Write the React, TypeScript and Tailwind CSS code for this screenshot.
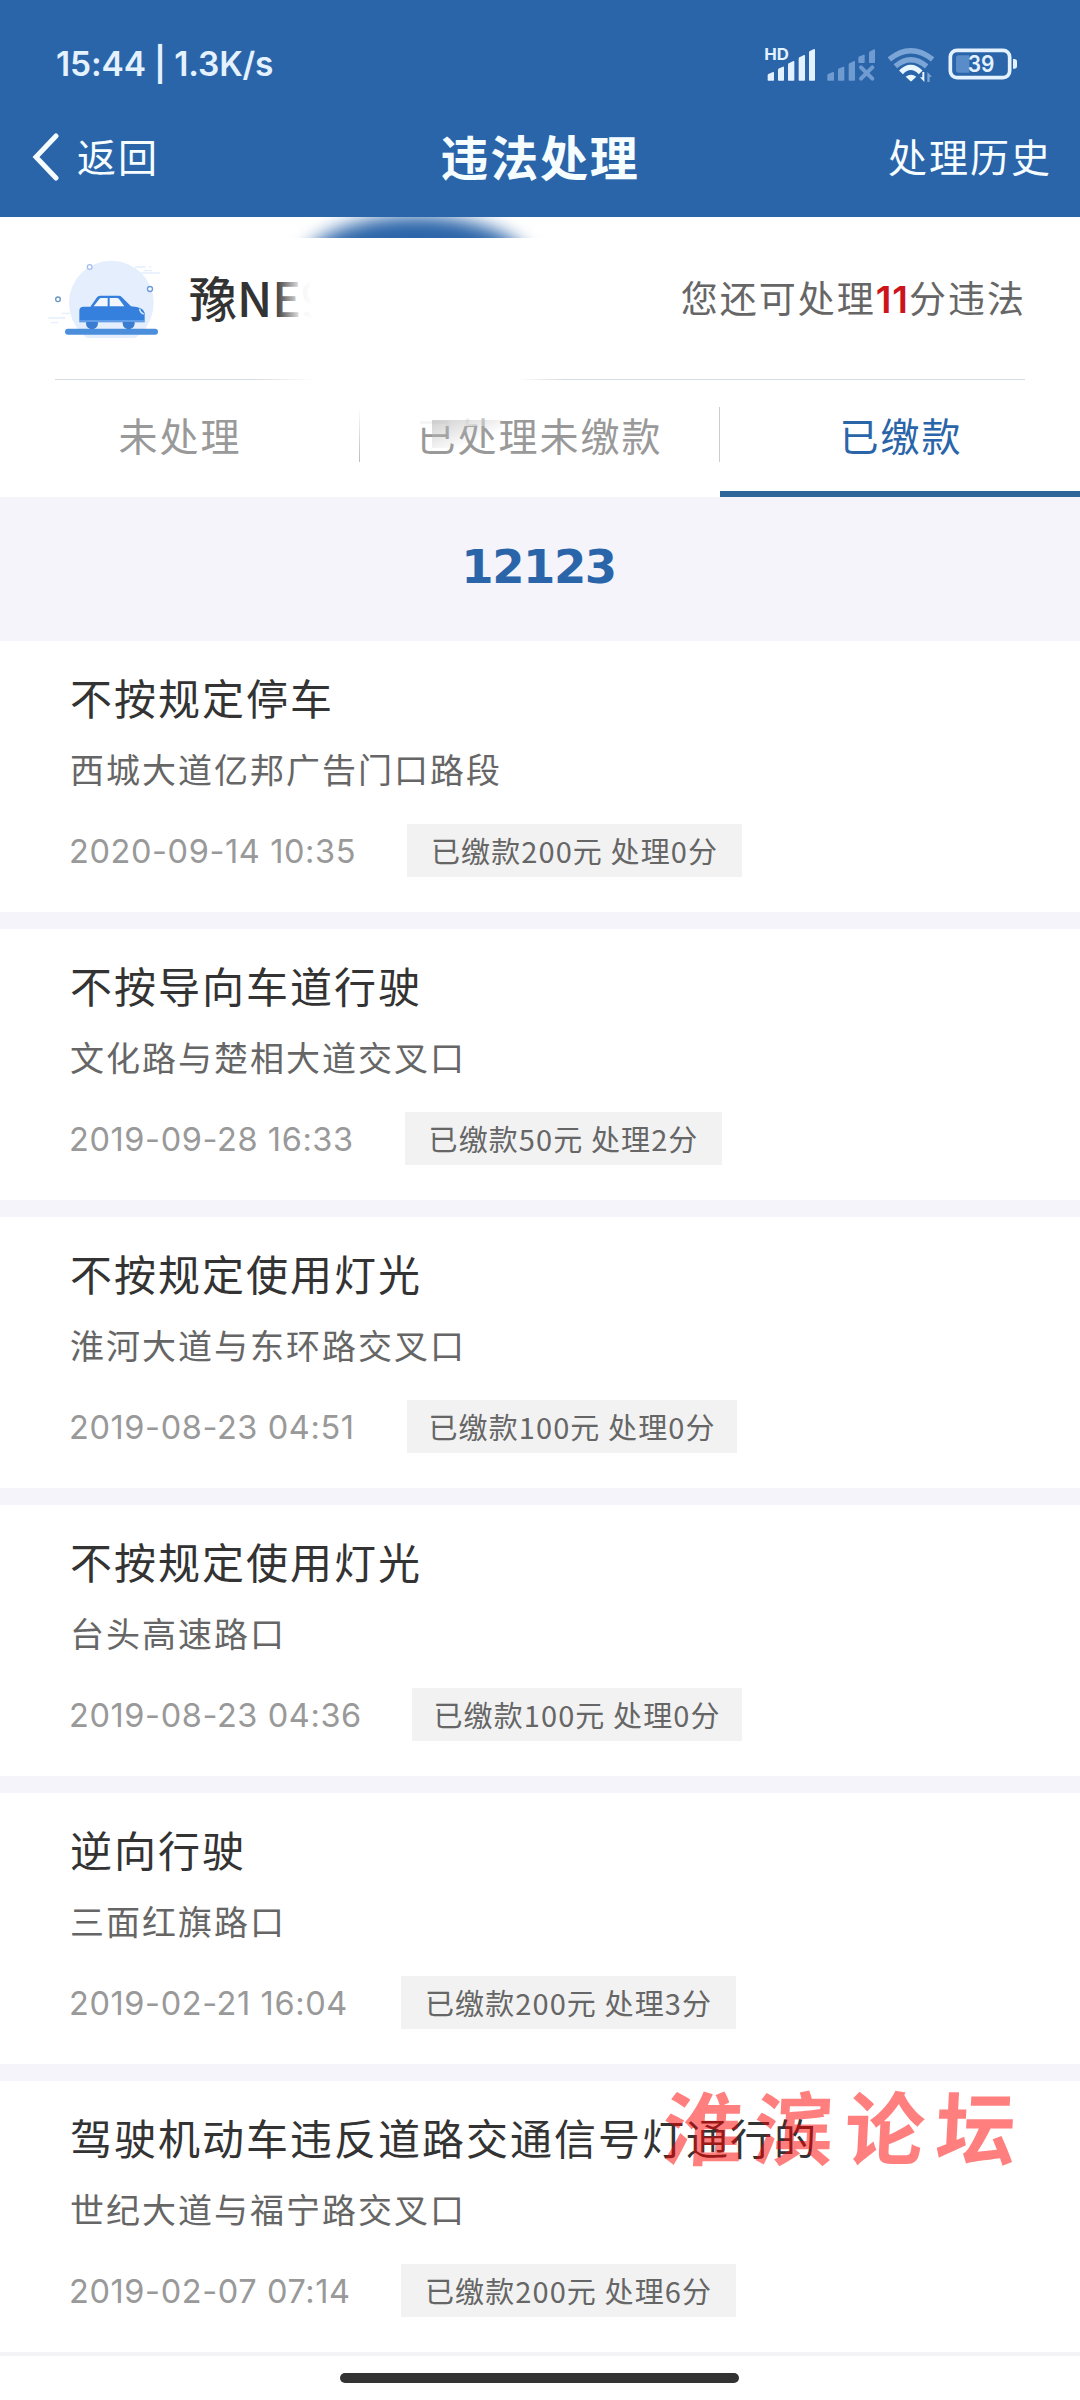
import React from 'react';

interface Violation {
  title: string;
  address: string;
  time: string;
  timeClass: string;
  tag: string;
  tagClass: string;
}

const violations: Violation[] = [
  {
    title: '不按规定停车',
    address: '西城大道亿邦广告门口路段',
    time: '2020-09-14 10:35',
    timeClass: 'w-[337px]',
    tag: '已缴款200元 处理0分',
    tagClass: 'w-[335px]',
  },
  {
    title: '不按导向车道行驶',
    address: '文化路与楚相大道交叉口',
    time: '2019-09-28 16:33',
    timeClass: 'w-[335px]',
    tag: '已缴款50元 处理2分',
    tagClass: 'w-[317px]',
  },
  {
    title: '不按规定使用灯光',
    address: '淮河大道与东环路交叉口',
    time: '2019-08-23 04:51',
    timeClass: 'w-[337px]',
    tag: '已缴款100元 处理0分',
    tagClass: 'w-[330px]',
  },
  {
    title: '不按规定使用灯光',
    address: '台头高速路口',
    time: '2019-08-23 04:36',
    timeClass: 'w-[342px]',
    tag: '已缴款100元 处理0分',
    tagClass: 'w-[330px]',
  },
  {
    title: '逆向行驶',
    address: '三面红旗路口',
    time: '2019-02-21 16:04',
    timeClass: 'w-[331px]',
    tag: '已缴款200元 处理3分',
    tagClass: 'w-[335px]',
  },
  {
    title: '驾驶机动车违反道路交通信号灯通行的',
    address: '世纪大道与福宁路交叉口',
    time: '2019-02-07 07:14',
    timeClass: 'w-[331px]',
    tag: '已缴款200元 处理6分',
    tagClass: 'w-[335px]',
  },
];

const StatusIcons: React.FC = () => (
  <svg width="270" height="60" viewBox="0 0 810 180" className="mt-[3px] shrink-0">
    <text x="28" y="72" fill="#e4f1ff" fontFamily="Inter, sans-serif" fontSize="48" fontWeight="700" textLength="74" lengthAdjust="spacingAndGlyphs">
      HD
    </text>
    {/* SIM 1 */}
    <g fill="#e4f1ff">
      <path d="M38 132v-14q0-4 4-5l12-5q3-1 3 3v21q0 2-2 2H40q-2 0-2-2z" />
      <path d="M69 132v-30q0-4 4-5l11-5q3-1 3 3v37q0 2-2 2H71q-2 0-2-2z" />
      <path d="M99 132v-46q0-4 4-5l12-6q3-1 3 3v54q0 2-2 2h-15q-2 0-2-2z" />
      <path d="M131 132v-64q0-4 4-5l12-6q3-1 3 3v72q0 2-2 2h-15q-2 0-2-2z" />
      <path d="M162 132v-83q0-4 4-5l11-5q3-1 3 3v90q0 2-2 2h-14q-2 0-2-2z" />
    </g>
    {/* SIM 2, no service */}
    <g fill="#6f9bd0">
      <path d="M217 132v-14q0-4 4-5l13-5q3-1 3 3v21q0 2-2 2h-16q-2 0-2-2z" />
      <path d="M249 132v-30q0-4 4-5l12-5q3-1 3 3v37q0 2-2 2h-15q-2 0-2-2z" />
      <path d="M281 132v-46q0-4 4-5l12-6q3-1 3 3v54q0 2-2 2h-15q-2 0-2-2z" />
      <path d="M310 79v-13q0-4 4-5l12-5q3-1 3 3v20q0 2-2 2h-15q-2 0-2-2z" />
      <path d="M342 79V51q0-4 4-5l11-6q3-1 3 3v36q0 2-2 2h-14q-2 0-2-2z" />
      <path d="M318 94l34 34M352 94l-34 34" fill="none" stroke="#6f9bd0" strokeWidth="12" strokeLinecap="round" />
    </g>
    {/* wifi */}
    <g fill="none" strokeLinecap="butt">
      <path d="M403 70Q467 18 533 70" stroke="#7ba5d6" strokeWidth="16" />
      <path d="M421 91Q467 51 515 91" stroke="#7ba5d6" strokeWidth="16" />
      <path d="M438 109Q467 79 497 109" stroke="#e9f6ff" strokeWidth="16" />
    </g>
    <path d="M452 122q16-12 32 0l-13 12q-3 3-6 0z" fill="#e9f6ff" />
    <path d="M508 108v30l-13-14h7v-16z" fill="#e9f6ff" />
    <path d="M517 138v-30l14 14h-7v16z" fill="#7ba5d6" />
    {/* battery */}
    <path d="M603 66q0-8 8-8h32v52h-32q-8 0-8-8z" fill="#5a8cc9" />
    <rect x="586" y="43" width="178" height="82" rx="20" fill="none" stroke="#e4f1ff" strokeWidth="11" />
    <path d="M774 69h4q8 0 8 8v13q0 8-8 8h-4z" fill="#e4f1ff" />
    <text x="638" y="109" fill="#e4f1ff" fontFamily="Inter, sans-serif" fontSize="67" fontWeight="600" textLength="80" lengthAdjust="spacingAndGlyphs">
      39
    </text>
  </svg>
);

const CarIllustration: React.FC = () => (
  <svg width="115" height="84" viewBox="0 0 345 252" className="mt-[-4px] shrink-0">
    <circle cx="199" cy="147" r="127" fill="#e4eefd" />
    <g stroke="#e4eefd" strokeWidth="4" fill="none">
      <path d="M270 39h32M313 39h6M296 50h26M268 57h77M278 68h20M10 192h50M50 178h24M18 206h22" />
    </g>
    <g fill="none" strokeWidth="4">
      <circle cx="134" cy="39" r="7" stroke="#a3bdec" fill="#fff" />
      <circle cx="315" cy="105" r="7.500" stroke="#6b9bdb" fill="#fff" />
      <circle cx="39" cy="136" r="7" stroke="#6b95c4" fill="#fff" />
    </g>
    <rect x="60" y="224" width="279" height="18" rx="9" fill="#4b8fdc" />
    <circle cx="141" cy="208" r="18" fill="#3a7ccf" />
    <circle cx="251" cy="208" r="18" fill="#3a7ccf" />
    <path d="M103 205v-35q0-12 13-12h20l20-28q3-5 9-5h56q6 0 9 4l28 28q38 2 41 20v28z" fill="#3480dc" />
    <path d="M146 157l17-22q2-3 5-3h20v25zM194 132h22q4 0 6 3l16 22h-44z" fill="#f2f7fe" />
    <path d="M284 164q1 12 12 16" fill="none" stroke="#e4eefd" strokeWidth="4" />
    <path d="M103 201h196" stroke="#8fbcf2" strokeWidth="3" />
  </svg>
);

const ViolationCard: React.FC<{ item: Violation }> = ({ item }) => (
  <div className="h-[271px] bg-white pl-[70px] pt-[26px]">
    <h3 className="whitespace-nowrap text-[42px] leading-[60px] tracking-[2px] text-[#333]">{item.title}</h3>
    <p className="mt-[18px] text-[34px] leading-[48px] tracking-[2px] text-[#666]">{item.address}</p>
    <div className="mt-[31px] flex h-[53px] items-center">
      <span className={`${item.timeClass} ml-[-1px] mr-px mt-[3px] shrink-0 whitespace-nowrap font-[Inter] text-[32.500px] tracking-[0.600px] text-[#999]`}>
        {item.time}
      </span>
      <span
        className={`${item.tagClass} flex h-full shrink-0 items-center justify-center whitespace-nowrap bg-[#f2f2f2] text-[29px] tracking-[1.100px] text-[#666]`}
      >
        {item.tag}
      </span>
    </div>
  </div>
);

export default function App() {
  return (
    <div
      lang="zh-CN"
      className="relative flex h-[2400px] w-[1080px] flex-col overflow-hidden bg-white font-['Noto_Sans_CJK_SC',sans-serif]"
    >
      <header className="h-[217px] shrink-0 bg-[#2b65a9] text-[#f6fdff]">
        <div className="flex h-[110px] items-center justify-between pl-[56px] pr-[55px] pt-[18px]">
          <span className="font-[Inter] text-[33.500px] font-semibold tracking-[-0.150px] text-[#e4f1ff]">15:44 | 1.3K/s</span>
          <StatusIcons />
        </div>
        <div className="grid h-[90px] grid-cols-3 items-center pl-[31px] pr-[28px]">
          <div className="flex items-center">
            <svg width="28" height="50" viewBox="0 0 28 50" className="mt-[4px]">
              <path d="M25 4L5 25l20 21" fill="none" stroke="#f6fdff" strokeWidth="5" strokeLinecap="round" />
            </svg>
            <span className="ml-[18px] text-[39px] tracking-[2px]">返回</span>
          </div>
          <h1 className="pr-[3px] text-center text-[48px] font-bold tracking-[1.800px]">违法处理</h1>
          <span className="text-right text-[39px] tracking-[2px]">处理历史</span>
        </div>
      </header>

      <section className="relative h-[280px] shrink-0 bg-white">
        {/* smudge left under the header */}
        <div className="absolute left-[280px] top-0 h-[21px] w-[280px] overflow-hidden">
          <div className="absolute left-[18px] top-[-1px] h-[110px] w-[236px] rounded-[50%] bg-[#2b65a9] blur-[9px]" />
        </div>

        <div className="flex h-[162px] items-center justify-between pl-[45px] pr-[54px]">
          <div className="flex items-center">
            <CarIllustration />
            <div className="relative ml-[29px] mt-[-4px] h-[70px] w-[140px] overflow-hidden text-[48px] font-medium leading-[70px] text-[#333]">
              豫NE9
              <div className="absolute inset-y-0 left-[86px] w-[54px] bg-linear-to-r from-white/0 via-white/95 via-50% to-white to-70%" />
            </div>
          </div>
          <p className="mt-[2px] text-[37px] tracking-[2px] text-[#666]">
            您还可处理<span className="font-[Inter] font-semibold tracking-[1px] text-[#cc151b]">11</span>分违法
          </p>
        </div>

        <div className="mx-[55px] flex h-[2px] justify-between">
          <div className="h-px w-[260px] bg-linear-to-r from-[#d5dade] from-75% to-white" />
          <div className="h-px w-[510px] bg-linear-to-l from-[#d5dade] from-90% to-white" />
        </div>

        <div className="grid h-[116px] grid-cols-3 text-[39px] tracking-[2px] text-[#999]">
          <div className="flex items-center justify-center pb-[9px]">
            <span>未处理</span>
          </div>
          <div className="ml-[-1px] flex items-center pb-[9px]">
            <div className="h-[55px] w-px bg-linear-to-b from-white to-[#bbb]" />
            <div className="relative flex-1 text-center">
              已处理未缴款
              <div className="absolute left-[50px] top-[4px] h-[17px] w-[90px] bg-linear-to-r from-white/90 from-60% to-white/0" />
              <div className="absolute left-[72px] top-[15px] h-[28px] w-[70px] bg-linear-to-br from-[#bbb]/70 to-white/0 to-70%" />
            </div>
            <div className="h-[55px] w-px bg-[#ccc]" />
          </div>
          <div className="flex items-center justify-center border-b-[6px] border-[#2f6699] pb-[3px] pl-[2px] text-[#2b65a9]">
            <span>已缴款</span>
          </div>
        </div>
      </section>

      <div className="flex h-[144px] shrink-0 items-center justify-center bg-[#f4f4fa] pb-[3px] pr-[3px]">
        <span className="font-['DejaVu_Sans'] text-[46.500px] font-bold leading-none tracking-[-1.500px] text-[#2b65a9]">12123</span>
      </div>

      <main className="flex flex-col gap-[17px] bg-[#f4f4fa]">
        {violations.map((item) => (
          <ViolationCard key={item.time} item={item} />
        ))}
      </main>

      <footer className="flex flex-1 justify-center border-t-4 border-[#f4f4f6] bg-white pr-[2px] pt-[17px]">
        <div className="h-[10px] w-[399px] rounded-full bg-[#333]" />
      </footer>

      {/* forum watermark */}
      <div className="absolute left-[663px] top-[2069px] -skew-x-3 whitespace-nowrap text-[80px] font-bold leading-[110px] tracking-[11px] text-[#ff0000]/50">
        淮滨论坛
      </div>
    </div>
  );
}
